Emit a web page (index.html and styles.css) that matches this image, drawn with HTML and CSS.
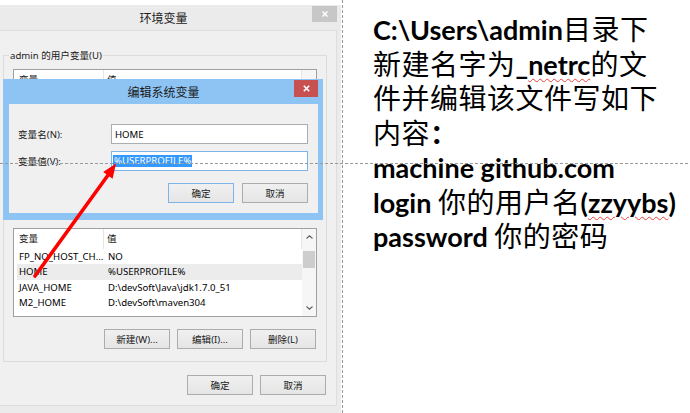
FILE: index.html
```html
<!DOCTYPE html>
<html lang="zh-CN">
<head>
<meta charset="utf-8">
<title>环境变量</title>
<link rel="stylesheet" href="styles.css">
</head>
<body>
<div class="stage">
  <div class="win">
    <div class="titlebar">
      <span class="tb-side"></span>
      <span class="title-text">环境变量</span>
      <span class="tb-side tb-right"><span class="close close-off"><svg width="6" height="6" viewBox="0 0 6 6"><path d="M0.5 0.5L5.5 5.5M5.5 0.5L0.5 5.5" stroke="#fff" stroke-width="1.5"/></svg></span></span>
    </div>
    <div class="client">
      <div class="group">
        <span class="group-label">admin 的用户变量(U)</span>
        <div class="list list-user">
          <div class="list-body">
            <div class="list-head"><span class="c1">变量</span><span class="c2">值</span></div>
          </div>
          <div class="scroll"></div>
        </div>
        <div class="list list-sys">
          <div class="list-body">
            <div class="list-head"><span class="c1">变量</span><span class="c2">值</span></div>
            <div class="row"><span class="c1">FP_NO_HOST_CH...</span><span class="c2">NO</span></div>
            <div class="row sel"><span class="c1">HOME</span><span class="c2">%USERPROFILE%</span></div>
            <div class="row"><span class="c1">JAVA_HOME</span><span class="c2">D:\devSoft\Java\jdk1.7.0_51</span></div>
            <div class="row"><span class="c1">M2_HOME</span><span class="c2">D:\devSoft\maven304</span></div>
          </div>
          <div class="scroll">
            <span class="sarrow"><svg width="7" height="4" viewBox="0 0 7 4"><path d="M0.5 3.5L3.5 0.8L6.5 3.5" fill="none" stroke="#606060" stroke-width="1.1"/></svg></span>
            <span class="thumb"></span>
            <span class="sfill"></span>
            <span class="sarrow"><svg width="7" height="4" viewBox="0 0 7 4"><path d="M0.5 0.5L3.5 3.2L6.5 0.5" fill="none" stroke="#606060" stroke-width="1.1"/></svg></span>
          </div>
        </div>
        <div class="btn-row group-btns">
          <span class="btn">新建(W)...</span>
          <span class="btn">编辑(I)...</span>
          <span class="btn">删除(L)</span>
        </div>
      </div>
      <div class="btn-row win-btns">
        <span class="btn">确定</span>
        <span class="btn">取消</span>
      </div>
    </div>
  </div>
  <div class="note">
    <div class="ln"><b class="en">C:\Users\admin</b>目录下</div>
    <div class="ln">新建名字为<b class="en">_<span class="sq">netrc</span></b>的文</div>
    <div class="ln">件并编辑该文件写如下</div>
    <div class="ln">内容<b class="en colon">：</b></div>
    <div class="ln"><b class="en">machine github.com</b></div>
    <div class="ln"><b class="en">login </b>你的用户名<b class="en">(<span class="sq">zzyybs</span>)</b></div>
    <div class="ln"><b class="en">password </b>你的密码</div>
  </div>
</div>

<div class="edit">
  <div class="titlebar edit-title">
    <span class="tb-side"></span>
    <span class="title-text">编辑系统变量</span>
    <span class="tb-side tb-right"><span class="close close-on"><svg width="7" height="7" viewBox="0 0 7 7"><path d="M0.8 0.8L6.2 6.2M6.2 0.8L0.8 6.2" stroke="#fff" stroke-width="1.6"/></svg></span></span>
  </div>
  <div class="edit-body">
    <div class="field">
      <span class="field-label">变量名(N):</span>
      <span class="input">HOME</span>
    </div>
    <div class="field">
      <span class="field-label">变量值(V):</span>
      <span class="input focus"><span class="selected">%USERPROFILE%</span></span>
    </div>
    <div class="btn-row edit-btns">
      <span class="btn default">确定</span>
      <span class="btn">取消</span>
    </div>
  </div>
</div>

<div class="guide-h"></div>

<svg class="arrow" width="690" height="413" viewBox="0 0 690 413">
  <line x1="35" y1="276" x2="108.5" y2="174.5" stroke="#ff0000" stroke-width="3.6" stroke-linecap="round"/>
  <polygon points="116,163.5 112.6,178.8 103.2,172.1" fill="#ff0000"/>
</svg>
</body>
</html>
```
FILE: styles.css
```css
* {
  box-sizing: border-box;
  margin: 0;
  padding: 0;
}

html, body {
  width: 690px;
  height: 413px;
  overflow: hidden;
  background: #ffffff;
}

body {
  position: relative;
  font-family: "Noto Sans", "Noto Sans CJK SC", sans-serif;
  font-size: 9.6px;
  color: #000;
}

.stage {
  display: flex;
  align-items: flex-start;
  height: 413px;
}

/* ---------- Environment variables window ---------- */
.win {
  flex: none;
  width: 355px;
  height: 412px;
  margin: 5px 0 0 -14px;
  padding: 0 4px;
  background: #ebebeb;
  display: flex;
  flex-direction: column;
}

.titlebar {
  height: 25px;
  display: grid;
  grid-template-columns: 1fr auto 1fr;
  align-items: start;
}

.title-text {
  font-family: "Noto Sans CJK SC", sans-serif;
  font-size: 12px;
  line-height: 25px;
  color: #1a1a1a;
}

.tb-right {
  display: flex;
  justify-content: flex-end;
}

.close {
  display: flex;
  align-items: center;
  justify-content: center;
  width: 25px;
  height: 16px;
  margin-top: 1px;
}

.close-off {
  background: #c7c7c7;
}

.client {
  flex: none;
  height: 376px;
  background: #f0f0f0;
  border: 1px solid #dddddd;
  display: flex;
  flex-direction: column;
}

.group {
  width: 324px;
  margin: 24px 0 0 12px;
  padding: 0 9px 12px 9px;
  border: 1px solid #dcdcdc;
  display: flex;
  flex-direction: column;
}

.group-label {
  align-self: flex-start;
  margin: -7px 0 0 -4px;
  padding: 0 1px;
  line-height: 14px;
  background: #f0f0f0;
  color: #1a1a1a;
}

.list {
  display: flex;
  background: #fff;
  border: 1px solid #a0a0a0;
}

.list-user {
  height: 140px;
  margin-top: 6px;
}

.list-sys {
  height: 89px;
  margin-top: 19px;
}

.list-body {
  flex: 1;
  padding-left: 3px;
  display: flex;
  flex-direction: column;
}

.list-head {
  display: flex;
  height: 20px;
  line-height: 20px;
  color: #1a1a1a;
}

.list-head .c1 {
  width: 87px;
  padding-left: 2px;
  border-right: 1px solid #e5e5e5;
}

.list-head .c2 {
  flex: 1;
  padding-left: 3px;
  border-right: 1px solid #e5e5e5;
}

.row {
  display: flex;
  height: 15.4px;
  line-height: 15px;
  white-space: nowrap;
}

.row .c1 {
  width: 88px;
  padding-left: 2px;
}

.row .c2 {
  flex: 1;
  padding-left: 3px;
}

.row.sel {
  background: #ececec;
}

.scroll {
  width: 14px;
  display: flex;
  flex-direction: column;
  align-items: center;
  background: #f6f6f6;
}

.sarrow {
  height: 16px;
  display: flex;
  align-items: center;
  justify-content: center;
}

.thumb {
  width: 12px;
  height: 17px;
  margin-top: 6px;
  background: #cdcdcd;
}

.sfill {
  flex: 1;
}

.btn-row {
  display: flex;
  justify-content: flex-end;
  gap: 7px;
}

.btn {
  width: 66px;
  height: 20px;
  display: flex;
  align-items: center;
  justify-content: center;
  border: 1px solid #acacac;
  background: linear-gradient(#f0f0f0, #e5e5e5);
  color: #1a1a1a;
}

.group-btns {
  margin-top: 12px;
  padding-right: 1px;
}

.win-btns {
  margin-top: 13px;
  padding-right: 10px;
}

/* ---------- Edit dialog (window above the other one) ---------- */
.edit {
  position: absolute;
  left: 3px;
  top: 79px;
  width: 320px;
  height: 141px;
  padding: 0 5px 7px 6px;
  background: #8ec4f3;
  display: flex;
  flex-direction: column;
}

.close-on {
  width: 24px;
  height: 17px;
  background: #c75050;
}

.edit-body {
  flex: 1;
  background: #f0f0f0;
  padding: 20px 10px 0 9px;
  display: flex;
  flex-direction: column;
  gap: 7px;
}

.field {
  display: flex;
  align-items: center;
}

.field-label {
  width: 93px;
  color: #1a1a1a;
}

.input {
  width: 197px;
  height: 20px;
  padding: 0 1px;
  display: flex;
  align-items: center;
  background: #fff;
  border: 1px solid #abadb3;
}

.input:not(.focus) {
  padding-left: 3px;
}

.input.focus {
  border-color: #7eb4ea;
}

.selected {
  display: inline-block;
  height: 12px;
  line-height: 12px;
  padding: 0 1px;
  background: #3399ff;
  color: #fff;
}

.edit-btns {
  margin-top: 5px;
  gap: 8px;
}

.btn.default {
  border-color: #7eb4ea;
}

/* ---------- Note text on the right ---------- */
.note {
  flex: 1;
  height: 413px;
  margin-left: 1px;
  padding: 11px 0 0 31px;
  background: repeating-linear-gradient(180deg, #9a9a9a 0 3px, transparent 3px 5px) left top / 1px 100% no-repeat;
  font-family: "Noto Sans CJK SC", sans-serif;
  font-size: 28px;
  letter-spacing: 0.5px;
  color: #000;
}

.ln {
  height: 34.5px;
  line-height: 34.5px;
  white-space: nowrap;
}

.en {
  font-family: "Lato", "Noto Sans CJK SC", sans-serif;
  font-size: 27px;
  font-weight: 700;
  letter-spacing: 0;
  line-height: 0;
}

.sq {
  text-decoration: underline wavy #e8403a;
  text-decoration-thickness: 1px;
  text-underline-offset: 3px;
}

/* ---------- overlays ---------- */
.guide-h {
  position: absolute;
  left: 0;
  top: 163px;
  width: 690px;
  height: 1px;
  background: repeating-linear-gradient(90deg, #9a9a9a 0 3px, transparent 3px 5px);
}

.arrow {
  position: absolute;
  left: 0;
  top: 0;
  pointer-events: none;
}
```
